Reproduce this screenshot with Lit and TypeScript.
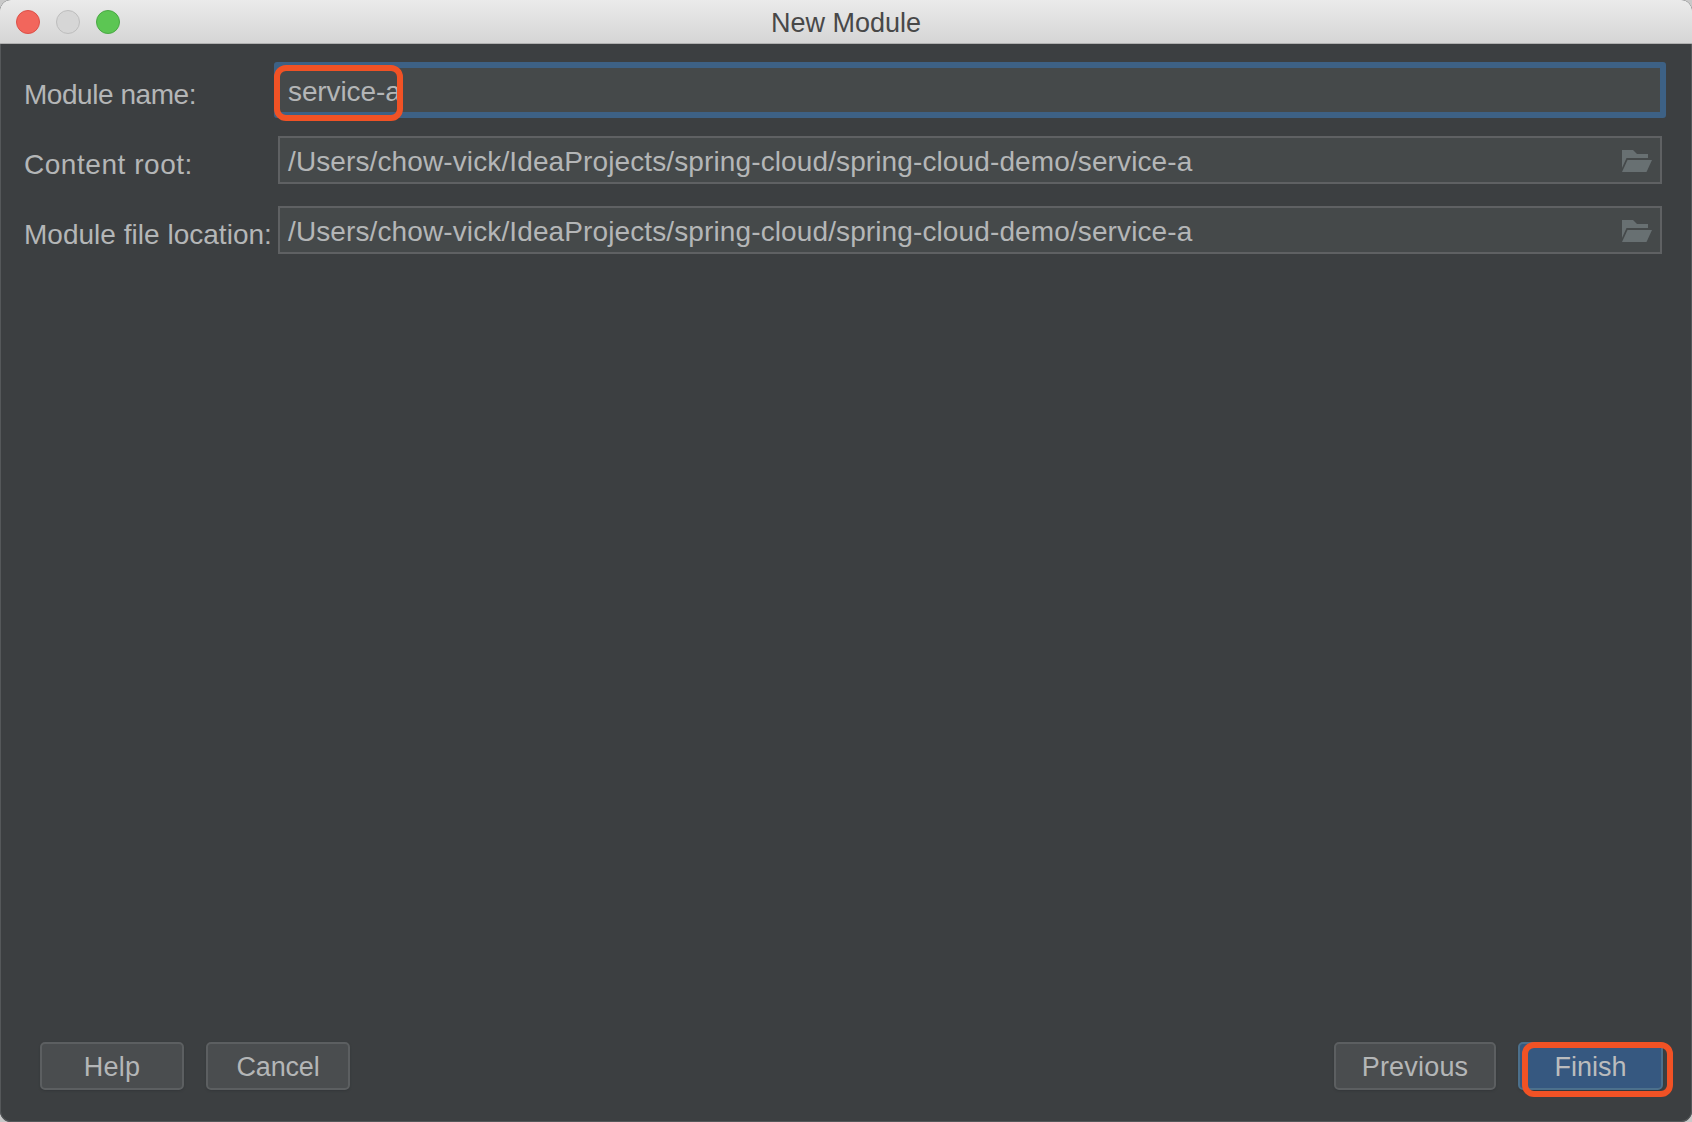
import { LitElement, html, css } from "lit";
import { customElement } from "lit/decorators.js";

const folder = html`<svg class="folder" width="30" height="22" viewBox="0 0 30 22">
  <path fill="#687072" d="M0 0H11L15 4H26V8H4.500L0 18Z"/>
  <path fill="#687072" d="M5.500 10H30L24.500 22H0Z"/>
</svg>`;

@customElement("app-root")
export class AppRoot extends LitElement {
  static styles = css`
    :host {
      display: block;
      width: 1692px;
      height: 1122px;
      background: #c9c9c9;
      font-family: "Liberation Sans", Arial, sans-serif;
      color: #b4b6b7;
    }
    .window {
      position: relative;
      box-sizing: border-box;
      width: 100%;
      height: 100%;
      display: flex;
      flex-direction: column;
      border-radius: 11px;
      overflow: hidden;
      background: #3c3f41;
      box-shadow: inset 0 0 0 1px #55585a;
    }
    .titlebar {
      flex: none;
      box-sizing: border-box;
      height: 44px;
      display: flex;
      align-items: center;
      position: relative;
      padding: 0 16px;
      gap: 16px;
      background: linear-gradient(#ebebeb, #d5d5d5);
      border-bottom: 1px solid #b0b0b0;
    }
    .light {
      box-sizing: border-box;
      width: 24px;
      height: 24px;
      border-radius: 50%;
      border: 1px solid;
    }
    .red { background: #f2665c; border-color: #dc5048; }
    .gray { background: #d6d6d6; border-color: #bdbdbd; }
    .green { background: #5cc653; border-color: #4aa845; }
    .title {
      position: absolute;
      left: 0;
      right: 0;
      top: 7px;
      text-align: center;
      font-size: 27px;
      line-height: 32px;
      color: #484848;
    }
    .form {
      display: grid;
      grid-template-columns: 254px 1fr;
      row-gap: 22px;
      padding: 22px 30px 0 24px;
      align-items: center;
      font-size: 28px;
    }
    .label {
      position: relative;
      top: 5px;
      white-space: nowrap;
      letter-spacing: 0.02px;
    }
    .label.name { letter-spacing: -0.45px; }
    .label.root { letter-spacing: 0.54px; }
    .field {
      box-sizing: border-box;
      height: 48px;
      display: flex;
      align-items: center;
      justify-content: space-between;
      padding: 0 8px 0 8px;
      background: #45494a;
      border: 2px solid #5f6163;
      letter-spacing: 0.115px;
    }
    .field span { padding-top: 3px; }
    .folder { margin-top: 2px; }
    .field.focus {
      height: 56px;
      margin: -4px;
      padding: 0 12px 0 8px;
      border: 6px solid #3d6185;
      border-radius: 3px;
      letter-spacing: -0.1px;
    }
    .spacer { flex: 1; }
    .footer {
      display: flex;
      gap: 22px;
      padding: 0 29px 32px 40px;
    }
    .btn {
      box-sizing: border-box;
      height: 48px;
      display: flex;
      align-items: center;
      justify-content: center;
      padding-top: 2px;
      font-size: 27px;
      letter-spacing: 0.2px;
      background: #4a4d4f;
      border: 2px solid #5c5f61;
      border-radius: 5px;
      box-shadow: 0 1px 2px #34373a;
    }
    .btn.tight { letter-spacing: -0.15px; }
    .w144 { width: 144px; }
    .w162 { width: 162px; }
    .w145 { width: 145px; }
    .primary {
      background: #365880;
      border-color: #4c708c;
      color: #bbbcbd;
      letter-spacing: 0;
    }
    .mark {
      position: absolute;
      box-sizing: border-box;
      border: 6px solid #f15225;
      border-radius: 12px;
    }
    .mark-name { left: 274px; top: 65px; width: 129px; height: 56px; }
    .mark-finish { left: 1522px; top: 1042px; width: 151px; height: 55px; }
  `;

  render() {
    const path = "/Users/chow-vick/IdeaProjects/spring-cloud/spring-cloud-demo/service-a";
    return html`
      <div class="window">
        <div class="titlebar">
          <span class="light red"></span>
          <span class="light gray"></span>
          <span class="light green"></span>
          <span class="title">New Module</span>
        </div>
        <div class="form">
          <span class="label name">Module name:</span>
          <div class="field focus"><span>service-a</span></div>
          <span class="label root">Content root:</span>
          <div class="field"><span>${path}</span>${folder}</div>
          <span class="label">Module file location:</span>
          <div class="field"><span>${path}</span>${folder}</div>
        </div>
        <div class="spacer"></div>
        <div class="footer">
          <div class="btn w144">Help</div>
          <div class="btn w144 tight">Cancel</div>
          <div class="spacer"></div>
          <div class="btn w162">Previous</div>
          <div class="btn w145 primary">Finish</div>
        </div>
        <div class="mark mark-name"></div>
        <div class="mark mark-finish"></div>
      </div>
    `;
  }
}
